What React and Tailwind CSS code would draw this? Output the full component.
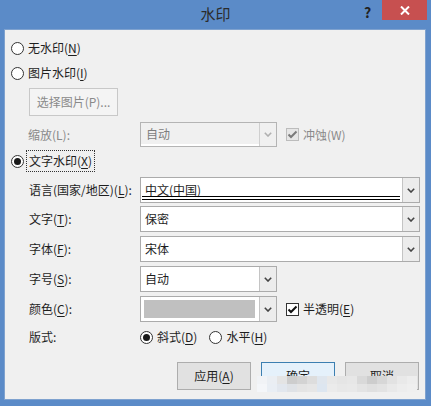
import React from "react";

// Win8-style "水印" dialog

const font = "font-['Noto_Sans_CJK_SC','Liberation_Sans',sans-serif]";

function Radio({ checked }) {
  return (
    <span className="w-[13px] h-[13px] rounded-full border border-[#333] bg-white flex items-center justify-center shrink-0">
      {checked && <span className="w-[7px] h-[7px] rounded-full bg-[#1a1a1a]" />}
    </span>
  );
}

function Check({ disabled }) {
  return (
    <span
      className={
        "w-[13px] h-[13px] border flex items-center justify-center shrink-0 " +
        (disabled ? "border-[#bcbcbc] bg-[#e6e6e6]" : "border-[#333] bg-white")
      }
    >
      <svg width="11" height="9" viewBox="0 0 11 9">
        <path
          d="M1.5 4.5 L4 7 L9.5 1.5"
          fill="none"
          stroke={disabled ? "#7a7a7a" : "#111"}
          strokeWidth="2"
        />
      </svg>
    </span>
  );
}

function Arrow({ disabled }) {
  return (
    <span
      className={
        "w-[17px] shrink-0 border-l flex items-center justify-center " +
        (disabled ? "border-[#cfcfcf] bg-[#f0f0f0]" : "border-[#c4c4c4] bg-[#ececec]")
      }
    >
      <svg width="8" height="5" viewBox="0 0 8 5">
        <path
          d="M0.8 0.8 L4 4 L7.2 0.8"
          fill="none"
          stroke={disabled ? "#b0b0b0" : "#444"}
          strokeWidth="1.6"
        />
      </svg>
    </span>
  );
}

function Key({ k }) {
  return (
    <>
      (<span className="underline underline-offset-2">{k}</span>)
    </>
  );
}

const mosaicTop = [
  "bg-[#f1f3f6]", "bg-[#eaeef3]", "bg-[#e4e4e4]", "bg-[#cdcdcd]",
  "bg-[#d3d3d3]", "bg-[#dddddd]", "bg-[#dfe6ee]", "bg-[#e8e8e8]",
  "bg-[#e5e5e5]", "bg-[#e7e7e7]", "bg-[#d9d9d9]", "bg-[#cdcdcd]",
  "bg-[#d7d7d7]", "bg-[#e2e2e2]", "bg-[#e9e9e9]", "bg-[#ededed]",
];
const mosaicBottom = [
  "bg-[#f4f6f9]", "bg-[#e9eef4]", "bg-[#e2e7ee]", "bg-[#dfe2e6]",
  "bg-[#e4e4e4]", "bg-[#e6e6e6]", "bg-[#dde6f0]", "bg-[#ebebeb]",
  "bg-[#e8e8e8]", "bg-[#e9e9e9]", "bg-[#e4e4e4]", "bg-[#e0e0e0]",
  "bg-[#e3e3e3]", "bg-[#e9e9e9]", "bg-[#ededed]", "bg-[#efefef]",
];

export default function App() {
  return (
    <div className={"w-[431px] h-[406px] bg-[#5b8bc8] flex flex-col text-[12px] text-[#1e1e1e] " + font}>
      {/* title bar */}
      <div className="relative h-[29px] flex items-center justify-center shrink-0">
        <span className="text-[15px] text-[#2b2b2b]">水印</span>
        <span className="absolute left-[364px] top-[2px] text-[14px] font-bold text-[#222]">?</span>
        <span className="absolute right-[4px] top-0 w-[45px] h-[20px] bg-[#c75050] flex items-center justify-center">
          <svg width="10" height="9" viewBox="0 0 10 9">
            <path d="M1 0.5 L9 8.5 M9 0.5 L1 8.5" stroke="#fff" strokeWidth="2" />
          </svg>
        </span>
      </div>

      {/* body */}
      <div className="relative ml-[4px] w-[422px] h-[371px] bg-[#f0f0f0] border border-[#7fa2cf] flex flex-col">
        <div className="flex items-center h-[14px] mt-[11px] ml-[6px] gap-[4px]">
          <Radio />
          <span>无水印<Key k="N" /></span>
        </div>
        <div className="flex items-center h-[14px] mt-[11px] ml-[6px] gap-[4px]">
          <Radio />
          <span>图片水印<Key k="I" /></span>
        </div>
        <div className="mt-[8px] ml-[24px] w-[89px] h-[28px] border border-[#c8c8c8] bg-[#f4f4f4] text-[#8a8a8a] flex items-center justify-center">
          选择图片(P)...
        </div>
        <div className="flex items-center mt-[6px] h-[25px]">
          <span className="w-[135px] pl-[23px] text-[#8a8a8a]">缩放(L):</span>
          <div className="w-[137px] h-[25px] border border-[#b4b4b4] bg-[#f0f0f0] flex">
            <span className="flex-1 pl-[5px] flex items-center text-[#7d7d7d] border-b-2 border-white">自动</span>
            <Arrow disabled />
          </div>
          <span className="ml-[9px] flex items-center gap-[4px] text-[#8a8a8a]">
            <Check disabled />
            <span>冲蚀(W)</span>
          </span>
        </div>
        <div className="flex items-center mt-[3px] h-[22px] ml-[6px] gap-[2px]">
          <Radio checked />
          <span className="h-[22px] px-[2px] flex items-center border border-dotted border-[#333]">
            <span>文字水印<Key k="X" /></span>
          </span>
        </div>

        {[
          { label: <>语言(国家/地区)<Key k="L" />:</>, value: "中文(中国)", mt: "mt-[5px]", lines: true },
          { label: <>文字<Key k="T" />:</>, value: "保密", mt: "mt-[3px]" },
          { label: <>字体<Key k="F" />:</>, value: "宋体", mt: "mt-[4px]" },
        ].map((r, i) => (
          <div key={i} className={"flex items-center h-[26px] " + r.mt}>
            <span className="w-[135px] pl-[24px]">{r.label}</span>
            <div className="w-[280px] h-[26px] border border-[#ababab] bg-white flex">
              <span className="relative flex-1 pl-[4px] flex items-center">
                <span>{r.value}</span>
                {r.lines && (
                  <span className="absolute left-[1px] right-[2px] top-[18px] h-[4px] border-y border-black" />
                )}
              </span>
              <Arrow />
            </div>
          </div>
        ))}

        <div className="flex items-center h-[26px] mt-[4px]">
          <span className="w-[135px] pl-[24px]">字号<Key k="S" />:</span>
          <div className="w-[137px] h-[26px] border border-[#ababab] bg-white flex">
            <span className="flex-1 pl-[4px] flex items-center">自动</span>
            <Arrow />
          </div>
        </div>
        <div className="flex items-center h-[26px] mt-[4px]">
          <span className="w-[135px] pl-[24px]">颜色<Key k="C" />:</span>
          <div className="w-[137px] h-[26px] border border-[#ababab] bg-white flex">
            <span className="flex-1 flex items-center pl-[3px]">
              <span className="w-[111px] h-[18px] bg-[#c0c0c0]" />
            </span>
            <Arrow />
          </div>
          <span className="ml-[9px] flex items-center gap-[4px]">
            <Check />
            <span>半透明<Key k="E" /></span>
          </span>
        </div>
        <div className="flex items-center h-[14px] mt-[8px]">
          <span className="w-[135px] pl-[24px]">版式:</span>
          <span className="flex items-center gap-[4px]">
            <Radio checked />
            <span>斜式<Key k="D" /></span>
          </span>
          <span className="ml-[12px] flex items-center gap-[4px]">
            <Radio />
            <span>水平<Key k="H" /></span>
          </span>
        </div>

        <div className="flex justify-end gap-[10px] pr-[6px] mt-[18px]">
          <span className="w-[74px] h-[28px] border border-[#adadad] bg-[#e1e1e1] flex items-center justify-center">
            <span>应用<Key k="A" /></span>
          </span>
          <span className="w-[74px] h-[28px] border border-[#3c7fb1] bg-[#e5f1fb] flex items-center justify-center">
            确定
          </span>
          <span className="w-[74px] h-[28px] border border-[#adadad] bg-[#e1e1e1] flex items-center justify-center">
            取消
          </span>
        </div>

        {/* pixelated blur over the lower buttons */}
        <div className="absolute left-[252px] top-[346px] flex flex-col">
          <div className="flex">
            {mosaicTop.map((c, i) => (
              <span key={i} className={"w-[10px] h-[8px] " + c} />
            ))}
          </div>
          <div className="flex">
            {mosaicBottom.map((c, i) => (
              <span key={i} className={"w-[10px] h-[8px] " + c} />
            ))}
          </div>
        </div>
      </div>
    </div>
  );
}
